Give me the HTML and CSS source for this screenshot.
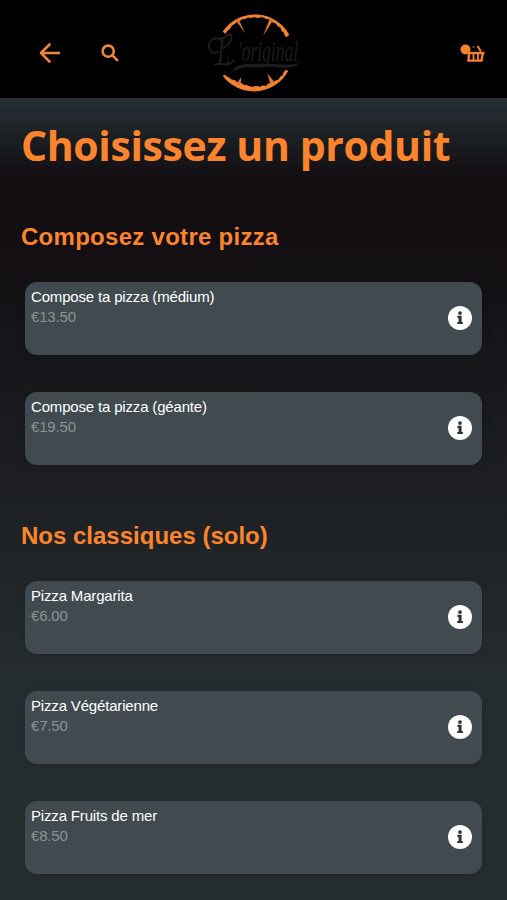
FILE: index.html
```html
<!DOCTYPE html>
<html lang="fr">
<head>
    <meta charset="UTF-8">
    <meta name="viewport" content="width=device-width, initial-scale=1.0">
    <title>L'original</title>
    <link rel="stylesheet" href="styles.css">
</head>
<body>
    <svg width="0" height="0" class="sprite" aria-hidden="true">
        <symbol id="icon-info" viewBox="0 0 24 24">
            <circle cx="12" cy="12" r="12" fill="#fff"/>
            <path d="M9.400 9.800h4.200v6.100h1.300v2.200H9.300v-2.200h1.300v-4H9.400z" fill="#2e3538"/>
            <circle cx="12" cy="7.100" r="1.900" fill="#2e3538"/>
        </symbol>
    </svg>

    <header class="navbar">
        <div class="nav-left">
            <a href="#" class="nav-link" aria-label="Retour">
                <svg width="22" height="22" viewBox="0 0 22 22" class="stroke-icon">
                    <path d="M10.500 2.500 2 11l8.500 8.700M2 11h18"/>
                </svg>
            </a>
            <a href="#" class="nav-link" aria-label="Rechercher">
                <svg width="18" height="18" viewBox="0 0 18 18" class="stroke-icon">
                    <circle cx="7.200" cy="7.200" r="5.600"/>
                    <path d="m11.600 11.600 4.600 4.600"/>
                </svg>
            </a>
        </div>

        <a href="#" class="logo">
            <svg width="94" height="84" viewBox="0 0 94 84">
                <g fill="#f2822f" stroke="#f2822f" stroke-width="1.200" stroke-linejoin="round">
                    <path d="M15.500 22.500A38.500 38.500 0 0 1 80.500 25.500L78.500 27.500Q76.500 26 76.300 23.500Q73.500 22 73 18.500Q69.500 17 68 14Q64 13.500 61.500 9.500Q58.500 10 56.500 8.200Q53 7 50 8.400Q46 7 43 8.400Q40 7 37 9.500Q33 9 31.500 11.700Q27.500 12 26.500 14.500Q22.500 16 21.500 19.500Q18.500 21 17.300 24z"/>
                    <path d="M15.500 67A38.500 38.500 0 0 0 79.500 62L77.500 61.700Q75.500 63.500 75.500 66.500Q72 67.500 71 71Q67 71.500 65 74.500Q61 74 58.500 77.500Q55 76.500 52 78.400Q48 77 45 78.300Q41 78.500 38.500 76.500Q35.500 77 33.500 74.500Q29 75 26.500 71.500Q22 71.500 20.500 68.500Q18 68.500 17 66.500z"/>
                </g>
                <path fill="#d9772f" d="M27.500 11 30.500 10 37.300 24.500zM62 9l3.500 1.500L55 27zM33.300 68l-.8 9-4-2zM59.300 64.500 66.500 73l-4 2.500z"/>
                <g class="logo-script">
                    <text x="30" y="52" font-size="30" textLength="60" lengthAdjust="spacingAndGlyphs">'original</text>
                    <text x="9" y="56" font-size="42" textLength="13" lengthAdjust="spacingAndGlyphs">L</text>
                    <path d="M13 31C7 27 1 31 1 37s5 9 10 5M17 28c4-5 8-2 6 3S19 37 15 39M6 56c8-5 12 5 20-5" class="swash"/>
                    <path d="M92 54c-10 3-20 1-32 1-16 0-33-2-35 8 8-7 20-4 32-5s26 4 35-4z"/>
                </g>
            </svg>
        </a>

        <a href="#" class="cart" aria-label="Panier">
            <svg width="26" height="20" viewBox="0 0 26 20">
                <g fill="none" stroke="#f6822f">
                    <path d="M17.500 2 21 7.500" stroke-width="2"/>
                    <path d="M8 9h16.500" stroke-width="2.400"/>
                    <path d="M9 9l-.5 7.600h13L22.700 9" stroke-width="2.400"/>
                    <path d="M13.500 9v7M18 9v7" stroke-width="1.800"/>
                </g>
                <circle cx="5.500" cy="5.500" r="5" fill="#f6822f"/>
                <circle cx="13.500" cy="3" r="1" fill="#9b531f"/>
            </svg>
        </a>
    </header>

    <main class="menu">
        <h1>Choisissez un produit</h1>

        <section class="category category-custom">
            <h2>Composez votre pizza</h2>
            <div class="product">
                <div>
                    <p class="name">Compose ta pizza (médium)</p>
                    <p class="price">€13.50</p>
                </div>
                <svg class="info"><use href="#icon-info"/></svg>
            </div>
            <div class="product">
                <div>
                    <p class="name">Compose ta pizza (géante)</p>
                    <p class="price">€19.50</p>
                </div>
                <svg class="info"><use href="#icon-info"/></svg>
            </div>
        </section>

        <section class="category">
            <h2>Nos classiques (solo)</h2>
            <div class="product">
                <div>
                    <p class="name">Pizza Margarita</p>
                    <p class="price">€6.00</p>
                </div>
                <svg class="info"><use href="#icon-info"/></svg>
            </div>
            <div class="product">
                <div>
                    <p class="name">Pizza Végétarienne</p>
                    <p class="price">€7.50</p>
                </div>
                <svg class="info"><use href="#icon-info"/></svg>
            </div>
            <div class="product">
                <div>
                    <p class="name">Pizza Fruits de mer</p>
                    <p class="price">€8.50</p>
                </div>
                <svg class="info"><use href="#icon-info"/></svg>
            </div>
        </section>
    </main>
</body>
</html>
```
FILE: styles.css
```css
:root {
    --primary-color: #fc842d;
    --card-color: #414b4f;
    --muted-color: #8c9294;
}

* {
    box-sizing: border-box;
}

body {
    margin: 0;
    height: 900px;
    overflow: hidden;
    background-color: #272e30;
    color: #fff;
    font-family: "Liberation Sans", Arial, sans-serif;
}

h1,
h2,
p {
    margin: 0;
}

.sprite {
    display: block;
}

.navbar {
    display: grid;
    grid-template-columns: 169px 94px 1fr;
    align-items: center;
    height: 98px;
    padding: 8px 21px 0 39px;
    background-color: #000;
}

.nav-left {
    display: flex;
    align-items: center;
    gap: 40px;
}

.nav-link,
.logo,
.cart {
    display: block;
}

.nav-link svg,
.logo svg,
.cart svg {
    display: block;
}

.logo {
    margin-bottom: 4px;
}

.logo svg {
    overflow: visible;
}

.stroke-icon {
    fill: none;
    stroke: #f08438;
    stroke-width: 2.6;
    stroke-linecap: round;
    stroke-linejoin: round;
}

.logo-script {
    fill: #1d1d1d;
    font-family: "Liberation Serif", serif;
    font-style: italic;
}

.swash {
    fill: none;
    stroke: #1d1d1d;
    stroke-width: 2;
}

.cart {
    justify-self: end;
    margin-top: 2px;
}

.menu {
    height: 802px;
    padding: 18px 25px 0;
    background: linear-gradient(#283033 0, #1b1f22 40px, #120d11 82px, #120e12 140px, #1d2023 400px, #262d30 600px, #272e30 100%);
}

h1 {
    margin-left: -4px;
    color: var(--primary-color);
    font-family: "Open Sans", sans-serif;
    font-size: 41px;
    font-weight: 700;
    line-height: 59px;
    letter-spacing: -0.38px;
    white-space: nowrap;
}

h2 {
    margin-left: -4px;
    color: var(--primary-color);
    font-size: 24px;
    line-height: 30px;
}

.category {
    padding-top: 56px;
}

.category-custom {
    padding-top: 47px;
}

.category-custom h2 {
    letter-spacing: 0.28px;
}

.product {
    display: flex;
    justify-content: space-between;
    align-items: center;
    height: 73px;
    margin-top: 37px;
    padding: 0 10px 0 6px;
    border-radius: 12px;
    background-color: var(--card-color);
    box-shadow: 0 2px 8px rgba(0, 0, 0, 0.15);
}

h2 + .product {
    margin-top: 30px;
}

.product > div {
    align-self: flex-start;
    padding-top: 5px;
}

.name,
.price {
    font-size: 15px;
    line-height: 20px;
    letter-spacing: -0.17px;
}

.price {
    color: var(--muted-color);
}

.info {
    width: 24px;
    height: 24px;
    margin-bottom: 1px;
}
```
